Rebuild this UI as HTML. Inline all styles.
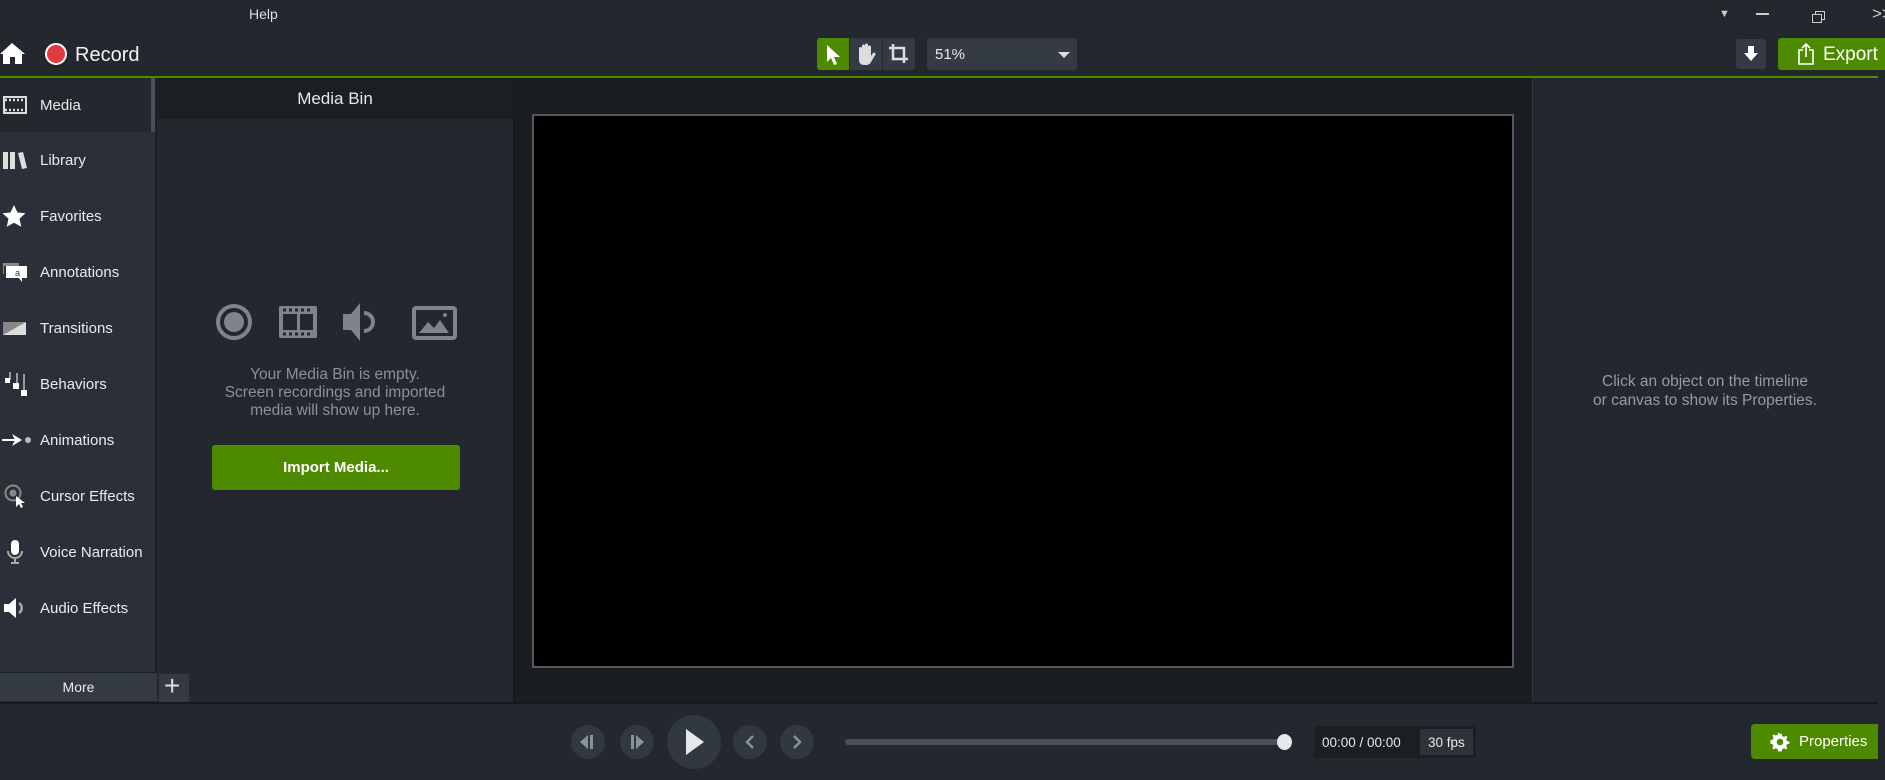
<!DOCTYPE html>
<html><head><meta charset="utf-8"><style>
*{margin:0;padding:0;box-sizing:border-box}
body{width:1885px;height:780px;background:#23272e;font-family:"Liberation Sans",sans-serif;color:#e8eaee;position:relative;overflow:hidden}
.a{position:absolute}
.side{left:0;top:78px;width:157px;height:594px;background:#2b3038;border-right:2px solid #1c1f23}
.item{position:absolute;left:0;width:155px;height:56px;font-size:15px;display:flex;align-items:center}
.item span{position:absolute;left:40px}
.item svg{position:absolute;left:2px}
.ctrl{position:absolute;border-radius:50%;background:#323840;display:flex;align-items:center;justify-content:center}
</style></head><body>
<div class="a" style="left:249px;top:6px;font-size:14px;color:#dde">Help</div>
<div class="a" style="left:1719px;top:8px;font-size:11px;color:#ccc">▼</div>
<div class="a" style="left:1756px;top:13px;width:13px;height:1.5px;background:#ccc"></div>
<div class="a" style="left:1815px;top:11px;width:10px;height:9px;border:1.5px solid #ccc"></div>
<div class="a" style="left:1812px;top:14px;width:10px;height:9px;border:1.5px solid #ccc;background:#23272e"></div>
<div class="a" style="left:1872px;top:4px;font-size:17px;color:#ccc">&gt;&gt;</div>
<svg class="a" style="left:0;top:42px" width="26" height="24" viewBox="0 0 26 24"><path d="M12 1L0 12h3v10h7v-7h5v7h7V12h3z" fill="#fff"/></svg>
<div class="a" style="left:45px;top:43px;width:22px;height:22px;border-radius:50%;background:#e0393e;border:2px solid #fff"></div>
<div class="a" style="left:75px;top:44px;font-size:20px;color:#f2f2f2">Record</div>
<div class="a" style="left:817px;top:38px;width:32px;height:32px;background:#4e8a00;border-radius:3px 0 0 3px"></div>
<svg class="a" style="left:825px;top:44px" width="16" height="22"><path d="M2 1v17l4-4 3 7 3-1-3-7h6z" fill="#fff"/></svg>
<div class="a" style="left:850px;top:38px;width:32px;height:32px;background:#353b44"></div>
<svg class="a" style="left:855px;top:42px" width="22" height="24" viewBox="0 0 22 24"><path d="M4 12V6.5a1.5 1.5 0 013 0V11V4a1.5 1.5 0 013 0v7V3a1.5 1.5 0 013 0v8V5a1.5 1.5 0 013 0v9l2-3a1.5 1.5 0 012.5 1.5L16 20c-1 2-3 3-5 3H9c-3 0-5-2-5-5z" fill="#ddd"/></svg>
<div class="a" style="left:883px;top:38px;width:32px;height:32px;background:#353b44;border-radius:0 3px 3px 0"></div>
<svg class="a" style="left:888px;top:43px" width="22" height="22"><path d="M5 1v15h15M1 5h15v15" stroke="#ddd" stroke-width="2.5" fill="none"/></svg>
<div class="a" style="left:927px;top:38px;width:150px;height:32px;background:#353b44;border-radius:3px"></div>
<div class="a" style="left:935px;top:46px;font-size:15px;color:#e8e8e8">51%</div>
<div class="a" style="left:1058px;top:52px;border:6px solid transparent;border-top:6px solid #ddd;border-bottom:0"></div>
<div class="a" style="left:1736px;top:39px;width:30px;height:30px;background:#353b44;border-radius:3px"></div>
<svg class="a" style="left:1743px;top:45px" width="16" height="18"><path d="M5 1h6v7h4l-7 8-7-8h4z" fill="#fff"/></svg>
<div class="a" style="left:1778px;top:38px;width:107px;height:32px;background:#4e8a00;border-radius:3px 0 0 3px"></div>
<svg class="a" style="left:1796px;top:42px" width="20" height="24"><path d="M7 8H3v14h14V8h-4M10 15V2M6 6l4-4 4 4" stroke="#fff" stroke-width="1.6" fill="none"/></svg>
<div class="a" style="left:1823px;top:44px;font-size:19px;color:#fff">Export</div>
<div class="a" style="left:0;top:76px;width:1878px;height:2px;background:#4e8a00"></div>
<div class="a side">
<div class="item" style="top:0;height:54px;background:#23272e;border-right:4px solid #4a5058"><svg width="26" height="22" viewBox="0 0 26 22"><rect x="2" y="3" width="22" height="16" fill="none" stroke="#ddd" stroke-width="2"/><path d="M3 6h20M3 16h20" stroke="#ddd" stroke-width="2.5" stroke-dasharray="2 2"/></svg><span>Media</span></div>
<div class="item" style="top:54px"><svg width="26" height="22"><path d="M1 3h5v17H1zM8 3h5v17H8zM16 4l5-1 4 16-5 1z" fill="#ddd"/></svg><span>Library</span></div>
<div class="item" style="top:110px"><svg width="26" height="24"><path d="M12 1l3.5 7.5 8 .8-6 5.5 1.8 8L12 18.8 4.7 22.8l1.8-8-6-5.5 8-.8z" fill="#fff"/></svg><span>Favorites</span></div>
<div class="item" style="top:166px"><svg width="26" height="22"><path d="M1 2h16v3H2v8H1z" fill="#888"/><path d="M4 5h21v12h-5v4l-3-4H4z" fill="#fff"/><text x="13" y="15" font-size="9" fill="#333" font-family="Liberation Sans">a</text></svg><span>Annotations</span></div>
<div class="item" style="top:222px"><svg width="26" height="18"><path d="M1 3h23v13H1z" fill="#ddd"/><path d="M24 3L1 16V3z" fill="#888"/></svg><span>Transitions</span></div>
<div class="item" style="top:278px"><svg width="26" height="26"><path d="M8 1v8M15 2v12M22 3v18" stroke="#999" stroke-width="2"/><rect x="3" y="7" width="5" height="5" fill="#fff"/><rect x="11" y="12" width="6" height="6" fill="#fff"/><rect x="19" y="19" width="6" height="6" fill="#fff"/></svg><span>Behaviors</span></div>
<div class="item" style="top:334px"><svg width="30" height="14"><path d="M0 7h14" stroke="#fff" stroke-width="2"/><path d="M10 1l10 6-10 6 3-6z" fill="#fff"/><circle cx="26" cy="7" r="3" fill="#bbb"/></svg><span>Animations</span></div>
<div class="item" style="top:390px"><svg width="26" height="26"><circle cx="11" cy="10" r="7.5" fill="none" stroke="#888" stroke-width="2"/><circle cx="11" cy="10" r="3.5" fill="#888"/><path d="M14 13v11l3-3 2 4 2-1-2-4h4z" fill="#fff"/></svg><span>Cursor Effects</span></div>
<div class="item" style="top:446px"><svg width="26" height="26"><rect x="9" y="1" width="8" height="15" rx="4" fill="#fff"/><path d="M6 12a7 7 0 0014 0M13 19v5M9 24h8" stroke="#aaa" stroke-width="2" fill="none"/></svg><span>Voice Narration</span></div>
<div class="item" style="top:502px"><svg width="26" height="26"><path d="M2 9h5l7-6v20l-7-6H2z" fill="#fff"/><path d="M17 8a6 6 0 010 10" stroke="#aaa" stroke-width="2.5" fill="none"/></svg><span>Audio Effects</span></div>
</div>
<div class="a" style="left:0;top:672px;width:157px;height:29px;background:#343a42;border-top:1px solid #1b1e22;font-size:14px;text-align:center;line-height:28px">More</div>
<div class="a" style="left:159px;top:674px;width:30px;height:28px;background:#343a42"></div>
<div class="a" style="left:164px;top:672px;font-size:28px;font-weight:300;color:#ddd;line-height:28px">+</div>
<div class="a" style="left:157px;top:78px;width:356px;height:41px;background:#1b1e22;font-size:17px;text-align:center;line-height:41px;color:#e8e8e8">Media Bin</div>
<svg class="a" style="left:212px;top:300px" width="250" height="44" viewBox="0 0 250 44">
<g fill="#7e848d" stroke="#7e848d">
<circle cx="22" cy="22" r="16" fill="none" stroke-width="4"/><circle cx="22" cy="22" r="10" stroke="none"/>
<rect x="67" y="6" width="38" height="32" rx="2" stroke="none"/>
<rect x="71" y="14" width="14" height="16" fill="#23272e" stroke="none"/><rect x="88" y="14" width="13" height="16" fill="#23272e" stroke="none"/>
<path d="M71 10h30M71 34h30" stroke="#23272e" stroke-width="3" stroke-dasharray="3 3"/>
<path d="M131 14h8l9-11v38l-9-11h-8z" stroke="none"/><path d="M152 13a9 9 0 010 18" fill="none" stroke-width="4"/>
<rect x="202" y="8" width="41" height="30" rx="2" fill="none" stroke-width="4"/><path d="M207 33l9-11 6 6 6-8 9 13z" stroke="none"/><circle cx="233" cy="15" r="2" stroke="none"/>
</g></svg>
<div class="a" style="left:157px;top:366px;width:356px;text-align:center;font-size:15.5px;line-height:18px;color:#8b9199">Your Media Bin is empty.<br>Screen recordings and imported<br>media will show up here.</div>
<div class="a" style="left:212px;top:445px;width:248px;height:45px;background:#4e8a00;border-radius:3px;text-align:center;line-height:45px;font-size:15px;font-weight:bold;color:#fff">Import Media...</div>
<div class="a" style="left:513px;top:78px;width:1019px;height:625px;background:#1a1d21;border-left:1px solid #15171a"></div>
<div class="a" style="left:532px;top:114px;width:982px;height:554px;background:#000;border:2px solid #55585c"></div>
<div class="a" style="left:1532px;top:78px;width:346px;height:625px;background:#23272f;border-left:1px solid #31363d"></div>
<div class="a" style="left:1532px;top:372px;width:346px;text-align:center;font-size:15.5px;line-height:19px;color:#959ba3">Click an object on the timeline<br>or canvas to show its Properties.</div>
<div class="a" style="left:0;top:702px;width:1878px;height:2px;background:#17191c"></div>
<div class="ctrl" style="left:571px;top:725px;width:34px;height:34px"><svg width="18" height="16"><path d="M9 1L1 8l8 7z" fill="#8a9098"/><rect x="11" y="1" width="3" height="14" fill="#8a9098"/></svg></div>
<div class="ctrl" style="left:620px;top:725px;width:34px;height:34px"><svg width="18" height="16"><rect x="3" y="1" width="3" height="14" fill="#8a9098"/><path d="M8 1l8 7-8 7z" fill="#8a9098"/></svg></div>
<div class="ctrl" style="left:667px;top:715px;width:54px;height:54px"><svg width="24" height="30"><path d="M4 2l18 13L4 28z" fill="#e6e8ec"/></svg></div>
<div class="ctrl" style="left:733px;top:725px;width:34px;height:34px"><svg width="12" height="16"><path d="M9 2L3 8l6 6" stroke="#8a9098" stroke-width="2.5" fill="none"/></svg></div>
<div class="ctrl" style="left:780px;top:725px;width:34px;height:34px"><svg width="12" height="16"><path d="M3 2l6 6-6 6" stroke="#8a9098" stroke-width="2.5" fill="none"/></svg></div>
<div class="a" style="left:845px;top:739px;width:440px;height:6px;border-radius:3px;background:#4a5058"></div>
<div class="a" style="left:1277px;top:734px;width:15px;height:16px;border-radius:50%;background:#e6e8ec"></div>
<div class="a" style="left:1314px;top:726px;width:162px;height:32px;background:#1b1e22;border-radius:3px"></div>
<div class="a" style="left:1322px;top:735px;font-size:13.5px;color:#e8e8e8">00:00 / 00:00</div>
<div class="a" style="left:1420px;top:729px;width:53px;height:26px;background:#2e333a"></div>
<div class="a" style="left:1428px;top:735px;font-size:13.5px;color:#e8e8e8">30 fps</div>
<div class="a" style="left:1751px;top:724px;width:127px;height:35px;background:#4e8a00;border-radius:4px 0 0 4px"></div>
<svg class="a" style="left:1770px;top:732px" width="20" height="20" viewBox="0 0 20 20"><path d="M10 1l2 0 .5 2.5 2 1 2.3-1.3 1.5 1.5-1.3 2.3 1 2L20.5 10v0 2l-2.5.5-1 2 1.3 2.3-1.5 1.5-2.3-1.3-2 1L12 20.5H8L7.5 18l-2-1-2.3 1.3-1.7-1.5 1.3-2.3-1-2L-.5 12V8l2.5-.5 1-2-1.3-2.3L3.2 1.7l2.3 1.3 2-1L8 -.5z" fill="#fff" transform="scale(.9) translate(1 1)"/><circle cx="10" cy="10" r="3.3" fill="#4e8a00"/></svg>
<div class="a" style="left:1799px;top:733px;font-size:15px;color:#fff">Properties</div>
</body></html>
